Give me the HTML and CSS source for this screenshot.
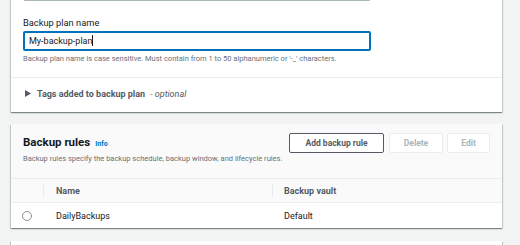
FILE: index.html
```html
<!DOCTYPE html>
<html>
<head>
<meta charset="utf-8">
<link rel="stylesheet" href="styles.css">
</head>
<body>
<div class="page">
  <section class="card card-top">
    <div class="card-body">
      <div class="input prev"></div>
      <label class="label">Backup plan name</label>
      <div class="input focused">My-backup-plan<span class="caret"></span></div>
      <div class="help">Backup plan name is case sensitive. Must contain from 1 to 50 alphanumeric or '-_' characters.</div>
    </div>
    <div class="expander">
      <svg class="tri" width="6" height="7" viewBox="0 0 6 7"><path d="M0 0 L6 3.5 L0 7 Z" fill="#545b64"/></svg>
      <span class="exp-title">Tags added to backup plan</span>
      <span class="optional">- optional</span>
    </div>
  </section>

  <section class="card card-rules">
    <div class="rules-head">
      <div class="rules-text">
        <div class="title-row"><h2 class="title">Backup rules</h2><a class="info">Info</a></div>
        <div class="desc">Backup rules specify the backup schedule, backup window, and lifecycle rules.</div>
      </div>
      <div class="actions">
        <button class="btn">Add backup rule</button>
        <button class="btn disabled">Delete</button>
        <button class="btn disabled">Edit</button>
      </div>
    </div>
    <div class="table">
      <div class="row thead">
        <div class="cell sel"></div>
        <div class="cell name"><span class="sep"></span>Name</div>
        <div class="cell vault"><span class="sep"></span>Backup vault</div>
      </div>
      <div class="row">
        <div class="cell sel"><span class="radio"></span></div>
        <div class="cell name">DailyBackups</div>
        <div class="cell vault">Default</div>
      </div>
    </div>
  </section>

  <section class="card card-next"></section>
</div>
</body>
</html>
```
FILE: styles.css
```css
* { box-sizing: border-box; }
html, body { margin: 0; padding: 0; }
body {
  background: #f2f3f3;
  font-family: Roboto, "Noto Sans", sans-serif;
  color: #16191f;
  width: 520px;
  height: 245px;
  overflow: hidden;
}
.page {
  padding: 0 18px 0 11px;
  margin-top: -38px;
}
.card {
  background: #fff;
  width: 491px;
  box-shadow: 0 1px 1px 0 rgba(0,28,36,0.3), 1px 1px 1px 0 rgba(0,28,36,0.15), -1px 1px 1px 0 rgba(0,28,36,0.15);
}
.card-top { margin-bottom: 12px; }
.card-body {
  padding: 19px 12px 13px 12px;
  border-bottom: 1px solid #eaeded;
}
.input {
  width: 348px;
  height: 20px;
  border: 1px solid #aab7b8;
  border-radius: 2px;
  font-size: 9px;
  line-height: 18px;
  padding-left: 5px;
}
.prev { margin-bottom: 15px; }
.label {
  display: block;
  font-size: 9.3px;
  line-height: 14px;
  margin-bottom: 1px;
}
.focused {
  border: 2px solid #0073bb;
  border-radius: 2px;
  line-height: 16px;
  padding-left: 4px;
}
.caret {
  display: inline-block;
  width: 1px;
  height: 11px;
  background: #16191f;
  vertical-align: -2px;
}
.help {
  font-size: 7.5px;
  color: #687078;
  margin-top: 3px;
  line-height: 10px;
}
.expander {
  height: 34px;
  display: flex;
  align-items: center;
  padding-left: 14px;
  padding-bottom: 3px;
  font-size: 9px;
}
.tri { margin-right: 6px; }
.exp-title { font-weight: bold; color: #545b64; }
.optional { font-style: italic; color: #545b64; margin-left: 5px; }

.rules-head {
  background: #fafafa;
  display: flex;
  justify-content: space-between;
  padding: 9px 12px 0 12px;
  height: 54px;
}
.title-row { display: flex; align-items: baseline; margin-top: 1px; }
.title { font-size: 11.5px; font-weight: bold; margin: 0; line-height: 16px; }
.info { font-size: 7px; font-weight: bold; color: #0073bb; margin-left: 5px; }
.desc { font-size: 7.5px; color: #687078; margin-top: 4px; }
.actions { display: flex; gap: 4px; }
.btn {
  height: 20px;
  border: 1px solid #545b64;
  background: #fff;
  color: #545b64;
  font-family: inherit;
  font-weight: bold;
  font-size: 8.5px;
  padding: 0;
  border-radius: 2px;
}
.actions .btn:first-child { width: 95px; margin-right: 1px; }
.btn.disabled { border-color: #eaeded; color: #aab7b8; width: 54px; }
.btn.disabled:last-child { width: 43px; }

.row { display: flex; height: 25px; align-items: center; font-size: 9px; }
.thead { background: #fafafa; border-top: 1px solid #eaeded; border-bottom: 1px solid #eaeded; font-weight: bold; color: #545b64; }
.cell { display: flex; align-items: center; height: 100%; position: relative; }
.sel { width: 32px; justify-content: center; }
.name { width: 229px; padding-left: 13px; }
.vault { padding-left: 12px; }
.thead .sep { position: absolute; left: 0; top: 5px; height: 13px; width: 1px; background: #eaeded; }
.radio { width: 10px; height: 10px; border: 1px solid #879596; border-radius: 50%; }
.card-rules { margin-bottom: 13px; }
.card-next { height: 30px; }
```
